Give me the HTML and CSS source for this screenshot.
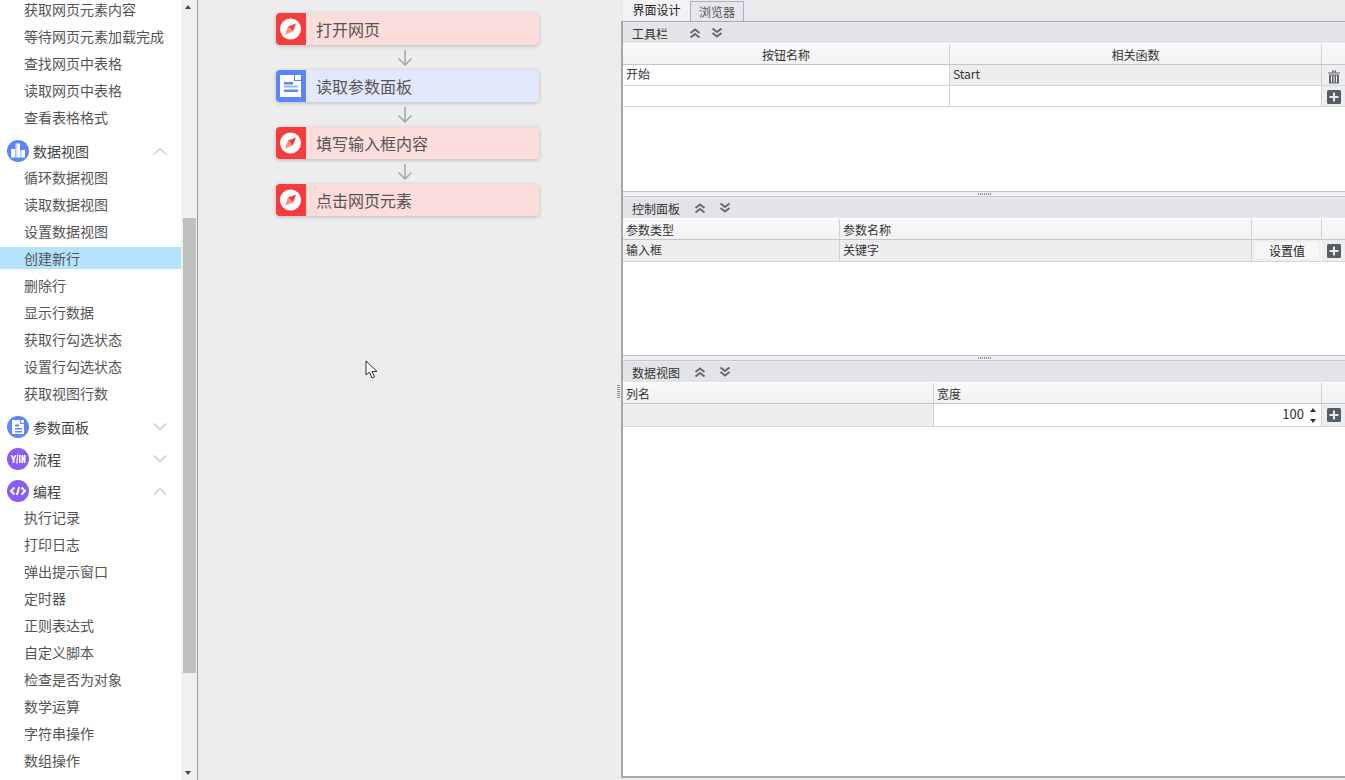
FILE: index.html
```html
<!DOCTYPE html>
<html lang="zh-CN">
<head>
<meta charset="utf-8">
<title>流程设计</title>
<link rel="stylesheet" href="styles.css">
</head>
<body>
<svg width="0" height="0" class="defs">
  <symbol id="compass" viewBox="0 0 30 32">
    <rect width="30" height="32" fill="#f53d3d"/>
    <circle cx="14.500" cy="16" r="10.500" fill="#fff"/>
    <path d="M20 10.500 17 18.500 12 13.500Z" fill="#f53d3d"/>
    <path d="M9 21.500 12 13.500 17 18.500Z" fill="#f8907c"/>
  </symbol>
  <symbol id="doc" viewBox="0 0 30 32">
    <rect width="30" height="32" fill="#5b86fb"/>
    <path d="M4 5H18V11H25V27H4Z" fill="#fff"/>
    <rect x="19" y="5" width="6" height="5" fill="#fff"/>
    <rect x="8" y="12" width="9" height="2.500" fill="#5b86fb"/>
    <rect x="8" y="15.500" width="14" height="2" fill="#8fbcfb"/>
    <rect x="8" y="19.500" width="14" height="2.500" fill="#5b86fb"/>
  </symbol>
  <symbol id="up" viewBox="0 0 14 8"><path d="M1 7.500 7 1.500 13 7.500" fill="none" stroke="#8f9aa0"/></symbol>
  <symbol id="down" viewBox="0 0 14 8"><path d="M1 .5 7 6.500 13 .5" fill="none" stroke="#8f9aa0"/></symbol>
  <symbol id="arrow" viewBox="0 0 16 16"><path d="M8 0V15M1.500 8.500 8 15 14.500 8.500" fill="none" stroke="#a6a6a6" stroke-width="1.500"/></symbol>
  <symbol id="dbl-up" viewBox="0 0 12 10"><path d="M1.500 5 6 1.500 10.500 5M1.500 9.500 6 6 10.500 9.500" fill="none" stroke="#666a70" stroke-width="2"/></symbol>
  <symbol id="dbl-down" viewBox="0 0 12 10"><path d="M1.500 .5 6 4 10.500 .5M1.500 5 6 8.500 10.500 5" fill="none" stroke="#666a70" stroke-width="2"/></symbol>
  <symbol id="plus" viewBox="0 0 14 14"><rect width="14" height="14" rx="1.500" fill="#555d66"/><path d="M7 2.500V11.500M2.500 7H11.500" stroke="#e8e8e8" stroke-width="2"/></symbol>
  <symbol id="trash" viewBox="0 0 12 14"><path d="M0 2.500H12V3.500H0ZM4 .5H8V2.500H7V1.500H5V2.500H4Z" fill="#5f666e"/><path d="M1 4.500H11V13.500H1Z" fill="#5f666e"/><path d="M3.500 5.500V12.500M6 5.500V12.500M8.500 5.500V12.500" stroke="#eee"/></symbol>
</svg>

<div class="app">
  <aside class="sidebar">
    <div class="tree">
      <div class="subs subs-first">
        <div class="row">获取网页元素内容</div>
        <div class="row">等待网页元素加载完成</div>
        <div class="row">查找网页中表格</div>
        <div class="row">读取网页中表格</div>
        <div class="row">查看表格格式</div>
      </div>
      <div class="group">
        <svg class="gicon" viewBox="0 0 22 22"><circle cx="11" cy="11" r="11" fill="#5b86fb"/><path d="M4 9H8V17.500H4ZM8.700 3.500H13V17.500H8.700ZM13.600 10H18V17.500H13.600Z" fill="#fff"/><path d="M8.700 3.500H10.500V17.500H8.700ZM13.600 10H15V17.500H13.600Z" fill="#cfe0ff"/></svg>
        <span class="gname">数据视图</span>
        <svg class="chev"><use href="#up"/></svg>
      </div>
      <div class="subs">
        <div class="row">循环数据视图</div>
        <div class="row">读取数据视图</div>
        <div class="row">设置数据视图</div>
        <div class="row row-on">创建新行</div>
        <div class="row">删除行</div>
        <div class="row">显示行数据</div>
        <div class="row">获取行勾选状态</div>
        <div class="row">设置行勾选状态</div>
        <div class="row">获取视图行数</div>
      </div>
      <div class="group">
        <svg class="gicon" viewBox="0 0 22 22"><circle cx="11" cy="11" r="11" fill="#5b86fb"/><path d="M5 4H13V8H17V18H5Z" fill="#fff"/><rect x="14" y="4" width="3" height="3" fill="#fff"/><path d="M8 8.500H12V10.500H8ZM8 12H15V13.500H8ZM8 15H15V16.500H8Z" fill="#5b86fb"/></svg>
        <span class="gname">参数面板</span>
        <svg class="chev"><use href="#down"/></svg>
      </div>
      <div class="group">
        <svg class="gicon" viewBox="0 0 22 22"><circle cx="11" cy="11" r="11" fill="#8a5cf6"/><path d="M3.500 7 5.500 11V15H7.500V11L9.500 7H8L6.500 9.500 5 7ZM12 7H13.500V15H12ZM14.500 7H16V10L17 7H18.500V15H17V11L16 15H14.500Z" fill="#fff"/><path d="M10.800 6.500 9.800 15.500" stroke="#fff" stroke-width="1.300"/></svg>
        <span class="gname">流程</span>
        <svg class="chev"><use href="#down"/></svg>
      </div>
      <div class="group">
        <svg class="gicon" viewBox="0 0 22 22"><circle cx="11" cy="11" r="11" fill="#8a5cf6"/><path d="M7.500 7.500 4 11 7.500 14.500M14.500 7.500 18 11 14.500 14.500M12.200 7 9.800 15" fill="none" stroke="#fff" stroke-width="2"/></svg>
        <span class="gname">编程</span>
        <svg class="chev"><use href="#up"/></svg>
      </div>
      <div class="subs">
        <div class="row">执行记录</div>
        <div class="row">打印日志</div>
        <div class="row">弹出提示窗口</div>
        <div class="row">定时器</div>
        <div class="row">正则表达式</div>
        <div class="row">自定义脚本</div>
        <div class="row">检查是否为对象</div>
        <div class="row">数学运算</div>
        <div class="row">字符串操作</div>
        <div class="row">数组操作</div>
      </div>
    </div>
    <div class="scrollbar">
      <div class="sarrow sarrow-up"></div>
      <div class="sthumb"></div>
      <div class="sarrow sarrow-down"></div>
    </div>
  </aside>

  <main class="canvas">
    <div class="flow">
      <div class="node node-red"><svg class="nicon"><use href="#compass"/></svg><span>打开网页</span></div>
      <svg class="flow-arrow"><use href="#arrow"/></svg>
      <div class="node node-blue"><svg class="nicon"><use href="#doc"/></svg><span>读取参数面板</span></div>
      <svg class="flow-arrow"><use href="#arrow"/></svg>
      <div class="node node-red"><svg class="nicon"><use href="#compass"/></svg><span>填写输入框内容</span></div>
      <svg class="flow-arrow"><use href="#arrow"/></svg>
      <div class="node node-red"><svg class="nicon"><use href="#compass"/></svg><span>点击网页元素</span></div>
    </div>
    <svg class="cursor" width="14" height="20" viewBox="0 0 14 20"><path d="M1 1V15L4.500 12 7 18 9.500 17 7 11.500H12Z" fill="#fff" stroke="#2c2c44"/></svg>
    <div class="vgrip"></div>
  </main>

  <section class="design">
    <div class="tabs">
      <div class="tab tab-on">界面设计</div>
      <div class="tab">浏览器</div>
    </div>
    <div class="pane">
      <div class="panel panel-tools">
        <div class="phead"><span class="ptitle">工具栏</span><svg class="dbl dbl-a"><use href="#dbl-up"/></svg><svg class="dbl dbl-b"><use href="#dbl-down"/></svg></div>
        <div class="trow thead thead-a cols-a"><div class="cell center">按钮名称</div><div class="cell center">相关函数</div><div class="cell"></div></div>
        <div class="trow cols-a"><div class="cell cell-up">开始</div><div class="cell cell-up grey">Start</div><div class="cell grey iconcell"><svg class="ico-trash"><use href="#trash"/></svg></div></div>
        <div class="trow cols-a"><div class="cell"></div><div class="cell"></div><div class="cell iconcell grey"><svg class="ico-plus ico-low"><use href="#plus"/></svg></div></div>
      </div>
      <div class="grip"></div>
      <div class="panel panel-ctrl">
        <div class="phead"><span class="ptitle">控制面板</span><svg class="dbl dbl-c"><use href="#dbl-up"/></svg><svg class="dbl dbl-d"><use href="#dbl-down"/></svg></div>
        <div class="trow thead cols-b tall"><div class="cell">参数类型</div><div class="cell">参数名称</div><div class="cell"></div><div class="cell"></div></div>
        <div class="trow cols-b tall grey"><div class="cell cell-up">输入框</div><div class="cell cell-up">关键字</div><div class="cell btncell"><div class="btn">设置值</div></div><div class="cell iconcell"><svg class="ico-plus"><use href="#plus"/></svg></div></div>
      </div>
      <div class="grip"></div>
      <div class="panel panel-data">
        <div class="phead"><span class="ptitle">数据视图</span><svg class="dbl dbl-c"><use href="#dbl-up"/></svg><svg class="dbl dbl-d"><use href="#dbl-down"/></svg></div>
        <div class="trow thead cols-c tall"><div class="cell">列名</div><div class="cell">宽度</div><div class="cell"></div></div>
        <div class="trow cols-c taller"><div class="cell grey"></div><div class="cell spin"><span class="spin-val">100</span><span class="spinner"><i class="sp-up"></i><i class="sp-down"></i></span></div><div class="cell iconcell grey"><svg class="ico-plus"><use href="#plus"/></svg></div></div>
      </div>
    </div>
  </section>
</div>
</body>
</html>
```

FILE: styles.css
```css
* { box-sizing: border-box; }
html, body { margin: 0; height: 100%; overflow: hidden; }
body { font-family: "Noto Sans CJK SC", "Liberation Sans", sans-serif; font-size: 13px; color: #333; background: #ededed; }
.defs { position: absolute; }
.app { display: grid; grid-template-columns: 198px 423px 724px; height: 780px; }

/* sidebar */
.sidebar { display: flex; height: 780px; border-right: 1px solid #9a9a9a; overflow: hidden; }
.tree { width: 181px; background: #fff; height: 780px; overflow: hidden; }
.subs { display: flex; flex-direction: column; gap: 5px; margin-top: -1px; margin-bottom: 7px; }
.subs-first { margin-top: -2px; }
.row { height: 22px; line-height: 22px; padding-left: 24px; color: #555; font-size: 14px; white-space: nowrap; }
.row-on { background: #b3e3fd; }
.group { height: 32px; display: flex; align-items: center; padding-left: 7px; }
.gicon { width: 22px; height: 22px; flex: none; }
.gname { margin-left: 4px; color: #444; font-size: 14px; flex: 1; }
.chev { width: 14px; height: 8px; margin-right: 14px; }
.scrollbar { width: 16px; background: #f0f0f0; display: flex; flex-direction: column; align-items: center; position: relative; }
.sthumb { position: absolute; left: 2px; top: 218px; width: 13px; height: 455px; background: #bfbfbf; }
.sarrow { position: absolute; left: 4px; width: 0; height: 0; border-left: 3.500px solid transparent; border-right: 3.500px solid transparent; }
.sarrow-up { top: 5px; border-bottom: 4px solid #44446a; }
.sarrow-down { bottom: 5px; border-top: 4px solid #44446a; }

/* canvas */
.canvas { position: relative; background: #ededed; padding: 13px 0 0 78px; }
.flow { width: 263px; display: flex; flex-direction: column; align-items: center; }
.node { width: 100%; height: 32px; display: flex; align-items: center; border-radius: 4px; overflow: hidden; box-shadow: 0 1px 4px rgba(0, 0, 0, .22); font-size: 16px; color: #555; }
.node span { margin-top: -1px; margin-left: -1px; }
.node-red { background: #fddcdc; }
.node-blue { background: #e3e9fc; }
.nicon { width: 30px; height: 32px; flex: none; margin-right: 11px; }
.flow-arrow { width: 16px; height: 16px; margin: 5px 5px 4px 0; }
.cursor { position: absolute; left: 167px; top: 360px; }
.vgrip { position: absolute; right: 1px; top: 385px; width: 3px; height: 13px; background: repeating-linear-gradient(#8d8d8d 0 1px, transparent 1px 2px); }

/* design */
.design { background: #ebebee; height: 780px; }
.tabs { display: flex; height: 21px; padding-left: 2px; }
.tab { width: 54px; height: 20px; margin-top: 1px; line-height: 20px; text-align: center; font-size: 12px; color: #555; background: #e6e6ec; border: 1px solid #b0b0b8; border-bottom: none; }
.tab-on { width: 67px; height: 21px; margin-top: 0; background: #f3f3f5; border: none; color: #222; }
.pane { height: 757px; border-top: 1px solid #a8a8ac; border-left: 2px solid #a8a8ac; border-bottom: 2px solid #a8a8ac; background: #ebebee; display: flex; flex-direction: column; }
.panel { background: #fff; border-top: 1px solid #ececf0; overflow: hidden; }
.panel-tools { height: 169px; }
.panel-ctrl { height: 158px; }
.panel-data { flex: 1; }
.grip { height: 6px; margin: 0; flex: none; position: relative; border-top: 1px solid #c6c6cc; border-bottom: 1px solid #c6c6cc; background: #f0f0f2; }
.grip::after { content: ""; position: absolute; left: 355px; top: 1px; width: 13px; height: 2px; background: repeating-linear-gradient(90deg, #8d8d8d 0 1px, transparent 1px 2px); }
.phead { height: 20px; background: #e3e4e8; display: flex; align-items: center; padding-left: 9px; position: relative; color: #333; }
.ptitle { font-size: 12px; }
.dbl { position: absolute; top: 5px; width: 12px; height: 10px; }
.dbl-a { left: 66px; }
.dbl-b { left: 88px; }
.dbl-c { left: 71px; }
.dbl-d { left: 96px; }
.trow { display: grid; height: 21px; border-bottom: 1px solid #d6d6da; font-size: 12px; }
.tall { height: 22px; }
.taller { height: 23px; }
.thead { background: linear-gradient(#f9f9f9, #f2f2f3); border-bottom-color: #c4c4cc; border-top: 1px solid #fff; color: #333; }
.thead-a { height: 22px; }
.cols-a { grid-template-columns: 327px 372px 1fr; }
.cols-b { grid-template-columns: 217px 412px 70px 1fr; }
.cols-c { grid-template-columns: 311px 388px 1fr; }
.cell { border-right: 1px solid #d2d2d6; padding-left: 3px; display: flex; align-items: center; min-width: 0; }
.cell:last-child { border-right: none; padding-left: 0; }
.cell-up { padding-bottom: 3px; }
.center { justify-content: center; padding-left: 0; }
.grey { background: #eeeeef; }
.iconcell { justify-content: center; padding-left: 1px; }
.cell.iconcell:last-child { padding-left: 1px; }
.ico-plus { width: 14px; height: 14px; }
.ico-low { margin-top: 2px; }
.ico-trash { width: 12px; height: 14px; margin-top: 3px; }
.btncell { padding: 2px 2px 3px 3px; border-right-color: #fff; }
.btn { width: 100%; height: 100%; background: #f7f7f7; text-align: center; line-height: 17px; font-size: 12px; color: #222; }
.spin { justify-content: flex-end; padding-right: 3px; background: #fff; font-size: 13px; }
.spin-val { margin-top: -3px; }
.spinner { width: 9px; height: 15px; margin-left: 5px; position: relative; display: block; }
.spinner i { position: absolute; left: 1px; width: 0; height: 0; border-left: 3.500px solid transparent; border-right: 3.500px solid transparent; }
.sp-up { top: 0; border-bottom: 4px solid #333; }
.sp-down { bottom: 0; border-top: 4px solid #333; }
```
